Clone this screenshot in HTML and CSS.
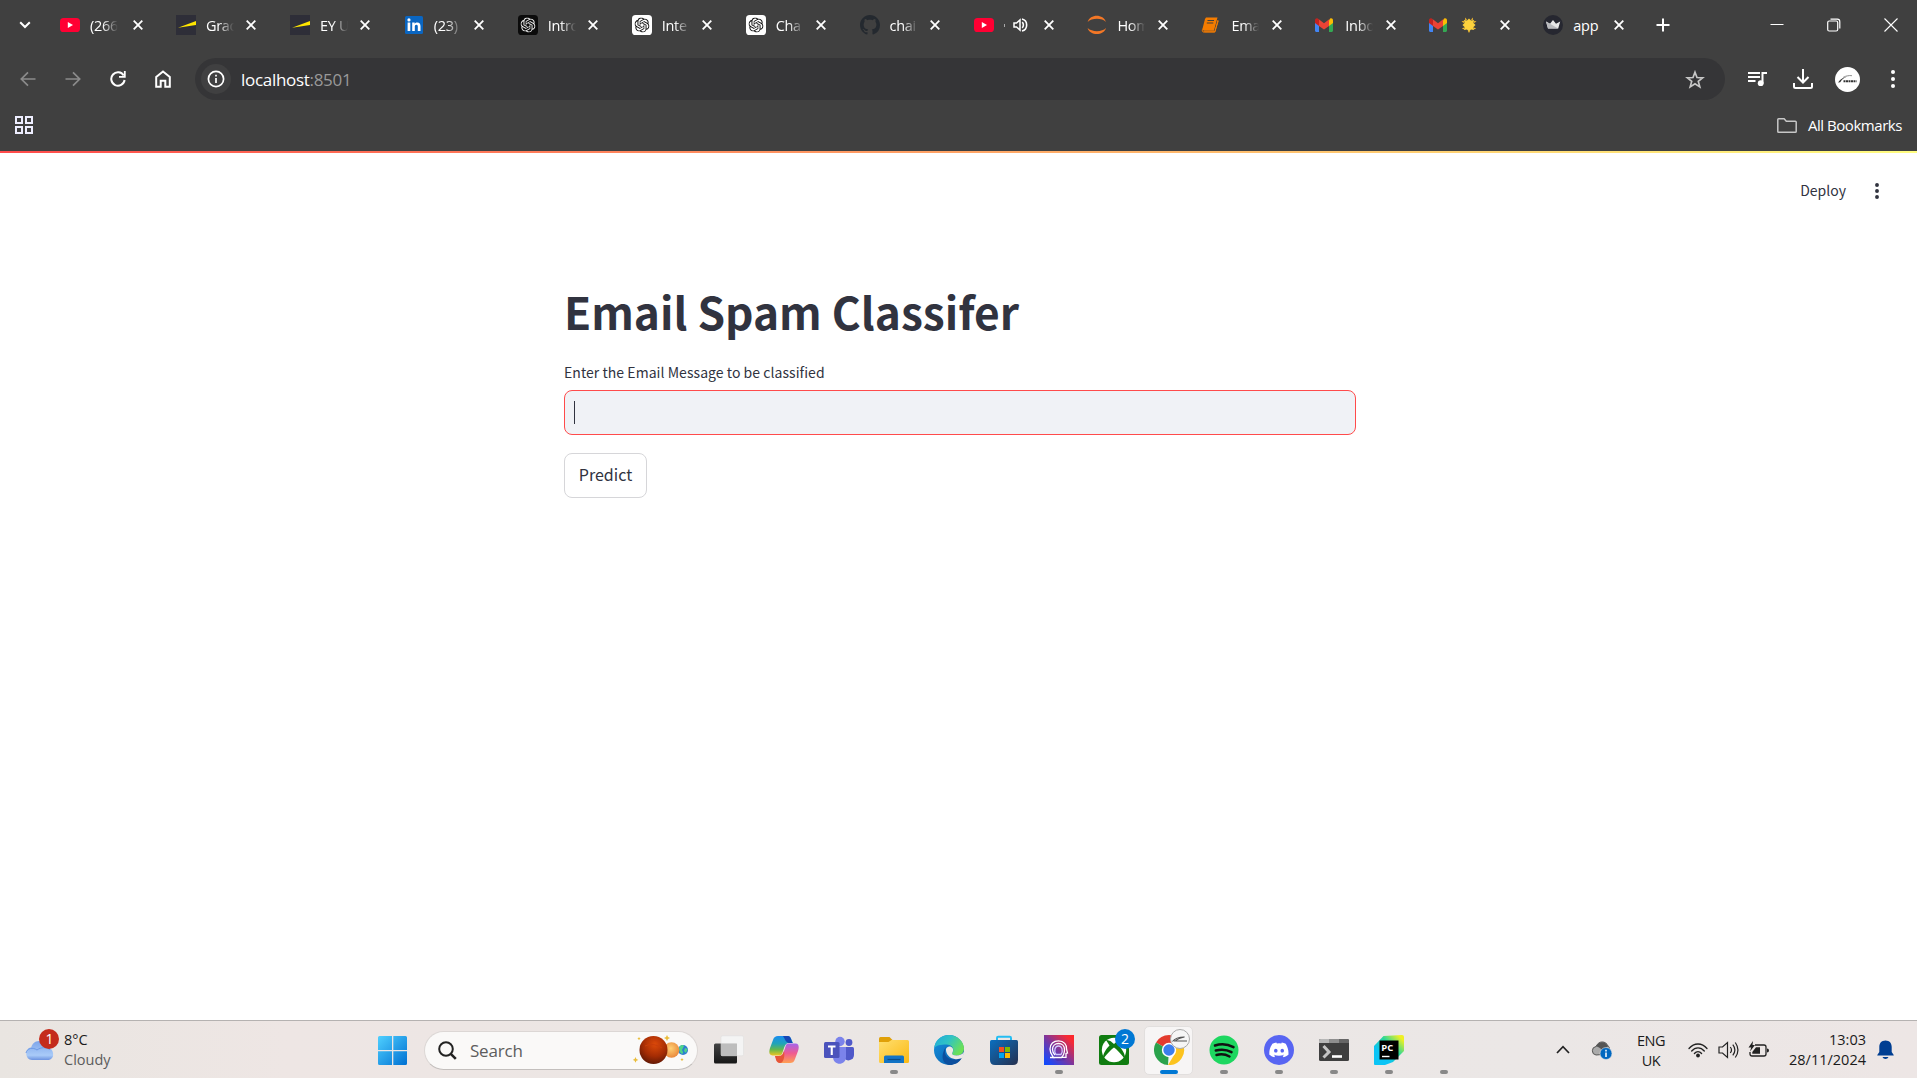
FILE: index.html
```html
<!DOCTYPE html>
<html lang="en">
<head>
<meta charset="utf-8">
<title>app</title>
<link rel="stylesheet" href="styles.css">
</head>
<body>
<svg class="defs" width="0" height="0">
  <defs>
    <linearGradient id="win" x1="0" y1="0" x2="1" y2="1"><stop offset="0" stop-color="#4fd0ff"/><stop offset="1" stop-color="#0070d2"/></linearGradient>
    <linearGradient id="cloud" x1="0" y1="0" x2="0" y2="1"><stop offset="0" stop-color="#7da5ea"/><stop offset=".75" stop-color="#a9cbf8"/><stop offset="1" stop-color="#6c93e0"/></linearGradient>
    <linearGradient id="dark" x1="0" y1="0" x2="0" y2="1"><stop offset="0" stop-color="#444"/><stop offset="1" stop-color="#171717"/></linearGradient>
    <linearGradient id="folder" x1="0" y1="0" x2="1" y2="1"><stop offset="0" stop-color="#ffdf70"/><stop offset="1" stop-color="#fbb912"/></linearGradient>
    <linearGradient id="edgeTop" x1="0" y1="0" x2="1" y2=".5"><stop offset="0" stop-color="#1fa9dc"/><stop offset=".5" stop-color="#30c3c4"/><stop offset="1" stop-color="#6be058"/></linearGradient>
    <linearGradient id="edgeLow" x1="0" y1="0" x2="1" y2="1"><stop offset="0" stop-color="#1593df"/><stop offset="1" stop-color="#0a58a7"/></linearGradient>
    <linearGradient id="bag" x1="0" y1="0" x2="1" y2="1"><stop offset="0" stop-color="#0a6fc0"/><stop offset="1" stop-color="#26304f"/></linearGradient>
    <linearGradient id="head" x1="0" y1="1" x2="1" y2="0"><stop offset="0" stop-color="#0b4bff"/><stop offset=".15" stop-color="#2446ee"/><stop offset=".5" stop-color="#80359a"/><stop offset=".85" stop-color="#f52a36"/><stop offset="1" stop-color="#ff2626"/></linearGradient>
    <linearGradient id="copA" x1="0" y1="0" x2="0" y2="1"><stop offset="0" stop-color="#1a8df0"/><stop offset=".4" stop-color="#20a4b8"/><stop offset=".7" stop-color="#66b84a"/><stop offset="1" stop-color="#f0c520"/></linearGradient>
    <linearGradient id="copB" x1="0" y1="0" x2="0" y2="1"><stop offset="0" stop-color="#a465ec"/><stop offset=".5" stop-color="#ef5a92"/><stop offset="1" stop-color="#ffa052"/></linearGradient>
    <linearGradient id="pc" x1="0" y1="1" x2="1" y2="0"><stop offset=".3" stop-color="#0bc4f5"/><stop offset=".6" stop-color="#28d79a"/><stop offset=".9" stop-color="#eef024"/></linearGradient>
    <radialGradient id="mars" cx=".55" cy=".3" r=".7"><stop offset="0" stop-color="#dc4a0a"/><stop offset=".6" stop-color="#a52c04"/><stop offset="1" stop-color="#641a05"/></radialGradient>
    <radialGradient id="venus" cx=".45" cy=".4" r=".6"><stop offset="0" stop-color="#ffd074"/><stop offset="1" stop-color="#e9893c"/></radialGradient>
  </defs>
  <symbol id="x" viewBox="0 0 10 10"><path d="M.7.7 9.3 9.3M9.3.7.7 9.3" stroke="#fff" stroke-width="1.8"/></symbol>
  <symbol id="yt" viewBox="0 0 20 20"><rect y="3" width="20" height="14" rx="3.6" fill="#ff0033"/><path d="M7.8 7v6l5.2-3z" fill="#fff"/></symbol>
  <symbol id="ey" viewBox="0 0 20 20"><path fill="#2e2e38" d="M0 0h20v20H0z"/><path d="M2 12.8 20 6v4z" fill="#ffe600"/></symbol>
  <symbol id="knot" viewBox="0 0 24 24"><path d="M22.28 9.82a5.98 5.98 0 0 0-.52-4.91 6.05 6.05 0 0 0-6.51-2.9A6.07 6.07 0 0 0 4.98 4.18a5.98 5.98 0 0 0-4 2.9 6.05 6.05 0 0 0 .74 7.1 5.98 5.98 0 0 0 .51 4.91 6.05 6.05 0 0 0 6.52 2.9A5.98 5.98 0 0 0 13.26 24a6.06 6.06 0 0 0 5.77-4.21 5.99 5.99 0 0 0 4-2.9 6.06 6.06 0 0 0-.75-7.07zM13.26 22.43a4.48 4.48 0 0 1-2.88-1.04l4.92-2.84a.8.8 0 0 0 .39-.68v-6.74l2.02 1.17v5.63a4.5 4.5 0 0 1-4.45 4.5zM3.6 18.3a4.47 4.47 0 0 1-.53-3.01l4.92 2.84a.77.77 0 0 0 .78 0l5.84-3.37v2.4L9.74 19.95A4.5 4.5 0 0 1 3.6 18.3zM2.34 7.9a4.49 4.49 0 0 1 2.37-1.98v5.68a.77.77 0 0 0 .39.68l5.81 3.35-2.02 1.17-4.83-2.79A4.5 4.5 0 0 1 2.34 7.9zm16.6 3.86L13.1 8.36 15.12 7.2l4.83 2.79a4.49 4.49 0 0 1-.68 8.1v-5.67a.79.79 0 0 0-.33-.66zm2.01-3.03-4.91-2.87a.78.78 0 0 0-.79 0L9.41 9.23V6.9l4.86-2.85a4.5 4.5 0 0 1 6.68 4.68zM8.31 12.86l-2.02-1.16V6.07a4.5 4.5 0 0 1 7.38-3.45L8.7 5.46a.8.8 0 0 0-.39.68zm1.1-2.37L12 9l2.6 1.5v3L12 15l-2.6-1.5z" fill="currentColor"/></symbol>
  <symbol id="gpt" viewBox="0 0 20 20"><rect width="20" height="20" rx="3.6" fill="#fff"/><use href="#knot" x="2.5" y="2.5" width="15" height="15" color="#111"/></symbol>
  <symbol id="gptd" viewBox="0 0 20 20"><rect width="20" height="20" rx="3.6" fill="#0b0b0b"/><use href="#knot" x="2.5" y="2.5" width="15" height="15" color="#eee"/></symbol>
  <symbol id="gm" viewBox="0 0 20 20"><path d="M0 5.2v10.3C0 16.4.6 17 1.5 17H4V8z" fill="#4285f4"/><path d="M18 5.2v10.3c0 .9-.6 1.5-1.5 1.5H14V8z" fill="#34a853"/><path d="M0 5.5V8l4 3V5.3L2.8 3.6C1.6 2.7 0 3.6 0 5.5z" fill="#c5221f"/><path d="M18 5.5V8l-4 3V5.3l1.2-1.7C16.4 2.7 18 3.6 18 5.5z" fill="#fbbc04"/><path d="M4 5.1 2.8 3.6 9 8.2l6.2-4.6L14 5.1V11l-5 3.5L4 11z" fill="#ea4335"/></symbol>
</svg>

<header class="chrome">
  <div class="tabstrip">
    <div class="tabsearch"><svg width="12" height="8" viewBox="0 0 12 8"><path d="m1.2 1.2 4.8 4.8 4.8-4.8" fill="none" stroke="#fff" stroke-width="2"/></svg></div>
    <div class="tab first"><svg class="fav"><use href="#yt"/></svg><span class="name">(266)</span><svg class="x"><use href="#x"/></svg></div>
    <div class="tab"><svg class="fav"><use href="#ey"/></svg><span class="name">Grad</span><svg class="x"><use href="#x"/></svg></div>
    <div class="tab"><svg class="fav"><use href="#ey"/></svg><span class="name">EY UK</span><svg class="x"><use href="#x"/></svg></div>
    <div class="tab"><svg class="fav" viewBox="0 0 20 20"><rect x="1" y="1" width="18" height="18" rx="1.5" fill="#0a66c2"/><path transform="translate(1 0)" d="M2.6 7.6h2.7V16H2.6zM7.2 7.6h2.5v1.2c.5-.9 1.4-1.4 2.6-1.4 2.3 0 3.2 1.4 3.2 3.9V16h-2.7v-4.3c0-1.2-.3-2-1.4-2-1.2 0-1.6.9-1.6 2V16H7.200z" fill="#fff"/><circle cx="4.95" cy="4.9" r="1.6" fill="#fff"/></svg><span class="name">(23)</span><svg class="x"><use href="#x"/></svg></div>
    <div class="tab"><svg class="fav"><use href="#gptd"/></svg><span class="name">Intro</span><svg class="x"><use href="#x"/></svg></div>
    <div class="tab"><svg class="fav"><use href="#gpt"/></svg><span class="name">Inte</span><svg class="x"><use href="#x"/></svg></div>
    <div class="tab"><svg class="fav"><use href="#gpt"/></svg><span class="name">Cha</span><svg class="x"><use href="#x"/></svg></div>
    <div class="tab"><svg class="fav" viewBox="0 0 16 16"><path fill="#24292f" d="M8 0C3.58 0 0 3.58 0 8c0 3.54 2.29 6.53 5.47 7.59.4.07.55-.17.55-.38 0-.19-.01-.82-.01-1.49-2.01.37-2.53-.49-2.69-.94-.09-.23-.48-.94-.82-1.13-.28-.15-.68-.52-.01-.53.63-.01 1.08.58 1.23.82.72 1.21 1.87.87 2.33.66.07-.52.28-.87.51-1.07-1.78-.2-3.64-.89-3.64-3.95 0-.87.31-1.59.82-2.15-.08-.2-.36-1.02.08-2.12 0 0 .67-.21 2.2.82.64-.18 1.32-.27 2-.27s1.36.09 2 .27c1.53-1.04 2.2-.82 2.2-.82.44 1.1.16 1.92.08 2.12.51.56.82 1.27.82 2.15 0 3.07-1.87 3.75-3.65 3.95.29.25.54.73.54 1.48 0 1.07-.01 1.93-.01 2.2 0 .21.15.46.55.38A8.01 8.01 0 0 0 16 8c0-4.42-3.58-8-8-8z"/></svg><span class="name">chai</span><svg class="x"><use href="#x"/></svg></div>
    <div class="tab"><svg class="fav"><use href="#yt"/></svg><span class="audio"><i></i><svg width="15" height="14" viewBox="0 0 15 14"><path d="M1 5h2.500L7 2v10L3.500 9H1z" fill="none" stroke="#fff" stroke-width="1.5"/><path d="M9.200 4.200c1.600 1.500 1.600 4.100 0 5.600M9 1c6.200 1.500 6.200 10.500 0 12" fill="none" stroke="#fff" stroke-width="1.6"/></svg></span><svg class="x"><use href="#x"/></svg></div>
    <div class="tab"><svg class="fav" viewBox="0 0 20 20"><path d="M.6 7C3-1.500 16.500-1.500 19 7 15 2.700 5 2.700.6 7zM.6 13c2.400 8 16 8 18.400 0-4 4.200-14 4.200-18.400 0z" fill="#f37726"/></svg><span class="name">Hom</span><svg class="x"><use href="#x"/></svg></div>
    <div class="tab"><svg class="fav" viewBox="0 0 20 20"><path d="M5 2.500h11.500l-3.600 13.200H3.300c-2.300-.4-2.300-1.500-1.600-2.600L4 4z" fill="#f57c00"/><path d="m17 5-3.200 11.700H2.600M1.400 14.500c-.6 2.400.8 2.600 2 2.600h10.400L17.200 6" fill="none" stroke="#f57c00" stroke-width="1"/><path d="M6.500 5.500h6.500M5.800 8h6.500" stroke="#40403f" stroke-width="1.200"/></svg><span class="name">Ema</span><svg class="x"><use href="#x"/></svg></div>
    <div class="tab"><svg class="fav"><use href="#gm"/></svg><span class="name">Inbo</span><svg class="x"><use href="#x"/></svg></div>
    <div class="tab"><svg class="fav"><use href="#gm"/></svg><span class="name sun"><svg width="16" height="16" viewBox="0 0 16 16"><path d="m8 1.500 2 2 3-.5-.5 3 2 2-2 2 .5 3-3-.5-2 2-2-2-3 .5.5-3-2-2 2-2-.5-3 3 .5z" fill="#fdd23c"/><path d="M4.500.5 6 3 3.800 2.800zM11.500.5 10 3l2.200-.2zM.5 4.500 3 6l-.2-2.200zM15.500 4.500 13 6l.2-2.200zM.8 11.800 3 10.500v1.700zM15.200 11.800 13 10.500v1.700zM8 16l-1-2h2z" fill="#f4b92c"/></svg></span><svg class="x"><use href="#x"/></svg></div>
    <div class="tab"><svg class="fav" viewBox="0 0 20 20"><circle cx="10" cy="10" r="10" fill="#262730"/><path d="m3 6.500 4 2.200L10 5l3 3.700 4.200-2.200-2 7H5z" fill="#e8e8e8"/><path d="m3 6.500 12.200 7H5z" fill="#b9babd"/></svg><span class="name full">app</span><svg class="x"><use href="#x"/></svg></div>
    <svg class="plus" width="14" height="14" viewBox="0 0 14 14"><path d="M7 .5v13M.5 7h13" stroke="#fff" stroke-width="2"/></svg>
    <div class="winbtns">
      <span><svg width="14" height="14" viewBox="0 0 14 14"><path d="M.5 6.500h13" stroke="#fff"/></svg></span>
      <span><svg width="14" height="14" viewBox="0 0 14 14"><rect x=".7" y="3" width="10" height="10" rx="1.500" fill="none" stroke="#fff" stroke-width="1.200"/><path d="M3.500 1.200h6.800c1.500 0 2.500 1 2.500 2.500v6.800" fill="none" stroke="#fff" stroke-width="1.200"/></svg></span>
      <span><svg width="14" height="14" viewBox="0 0 14 14"><path d="m.5.5 13 13m0-13-13 13" stroke="#fff" stroke-width="1.100"/></svg></span>
    </div>
  </div>
  <div class="toolbar">
    <span class="nav"><svg width="16" height="16" viewBox="0 0 16 16"><path d="M15.500 8H2M8 1.300 1.300 8 8 14.700" fill="none" stroke="#8b8b8b" stroke-width="1.700"/></svg></span>
    <span class="nav"><svg width="16" height="16" viewBox="0 0 16 16"><path d="M.5 8H14M8 1.300 14.700 8 8 14.700" fill="none" stroke="#8b8b8b" stroke-width="1.700"/></svg></span>
    <span class="nav"><svg width="16" height="16" viewBox="0 0 16 16"><path d="M13.700 4.500A6.700 6.700 0 1 0 14.600 9" fill="none" stroke="#fff" stroke-width="2"/><path d="M15.700 0v6.800H9V5h4.900V0z" fill="#fff"/></svg></span>
    <span class="nav"><svg width="16" height="18" viewBox="0 0 16 18"><path d="M1.200 16.800V7L8 1.500 14.800 7v9.800h-4.500v-6H5.700v6z" fill="none" stroke="#fff" stroke-width="2"/></svg></span>
    <div class="omnibox">
      <span class="info"><svg width="18" height="18" viewBox="0 0 18 18"><circle cx="9" cy="9" r="7.600" fill="none" stroke="#fff" stroke-width="1.700"/><path d="M9 8v5M9 4.800v1.800" stroke="#fff" stroke-width="1.700"/></svg></span>
      <span class="url">localhost<em>:8501</em></span>
      <svg class="star" width="20" height="19" viewBox="0 0 20 19"><path d="m10 2.200 2 5.300 5.700.3-4.400 3.600 1.500 5.500L10 13.800l-4.800 3.100 1.500-5.500-4.400-3.600L8 7.500z" fill="none" stroke="#c7c7c7" stroke-width="1.700"/></svg>
    </div>
    <div class="actions">
      <span><svg width="20" height="16" viewBox="0 0 20 16"><path d="M0 2h12M0 6h12M0 10h7.500" stroke="#fff" stroke-width="2"/><path d="M14.500 12.500V2H19" fill="none" stroke="#fff" stroke-width="2"/><circle cx="12.700" cy="12.200" r="2.900" fill="#fff"/></svg></span>
      <span><svg width="20" height="20" viewBox="0 0 20 20"><path d="M10 0v13M4.500 8l5.500 5.500L15.500 8M1 14v3.500c0 .8.500 1.500 1.500 1.500h15c1 0 1.500-.7 1.500-1.500V14" fill="none" stroke="#fff" stroke-width="2"/></svg></span>
      <span><svg width="25" height="25" viewBox="0 0 25 25"><circle cx="12.500" cy="12.500" r="12.500" fill="#fff"/><path d="M3 15.500c2.500-3.600 6-5.800 11-6.300-4 1-7 2.300-8.800 6z" fill="#333"/><path d="M8 10.500c3-1.800 6-2.200 9-1.800" fill="none" stroke="#777" stroke-width=".8"/><path d="M8.500 14.200h13" stroke="#333" stroke-width="2" stroke-dasharray="2 .5"/></svg></span>
      <span><svg width="4" height="18" viewBox="0 0 4 18"><g fill="#fff"><circle cx="2" cy="2" r="2"/><circle cx="2" cy="9" r="2"/><circle cx="2" cy="16" r="2"/></g></svg></span>
    </div>
  </div>
  <div class="bookmarks">
    <svg width="18" height="18" viewBox="0 0 18 18"><g fill="none" stroke="#eef" stroke-width="2"><path d="M1 1h6v6H1zM11 1h6v6h-6zM1 11h6v6H1zM11 11h6v6h-6z"/></g></svg>
    <div class="allb"><svg width="20" height="15" viewBox="0 0 20 15"><path d="M.8 1.600c0-.5.300-.8.800-.8h5.500l2.200 2.400h9c.500 0 .900.300.900.900v9.300c0 .5-.4.800-.9.800H1.600c-.5 0-.8-.3-.8-.8z" fill="none" stroke="#c7c7c7" stroke-width="1.500"/></svg><span>All Bookmarks</span></div>
  </div>
</header>

<main class="app">
  <div class="decoration"></div>
  <div class="appbar"><span class="deploy">Deploy</span><svg width="4" height="16" viewBox="0 0 4 16"><g fill="#31333f"><circle cx="2" cy="2" r="1.950"/><circle cx="2" cy="8" r="1.950"/><circle cx="2" cy="14" r="1.950"/></g></svg></div>
  <section class="block">
    <h1>Email Spam Classifer</h1>
    <label>Enter the Email Message to be classified</label>
    <div class="input"><i class="caret"></i></div>
    <button class="predict">Predict</button>
  </section>
</main>

<footer class="taskbar">
  <div class="weather">
    <svg width="35" height="34" viewBox="0 0 35 34"><path d="M7 31a6.500 6.500 0 0 1-.7-12.800C7 15 10 12 14 12c4.500 0 7.500 3 8.300 6.800A6.300 6.300 0 0 1 24 31z" fill="url(#cloud)"/><path d="M1 24c1-5 7-6 11-3 4-3 9-3 13-.5" fill="none" stroke="#6d99e6" stroke-width="1"/><circle cx="24" cy="10" r="10" fill="#c42b1c"/><text x="24.500" y="15" text-anchor="middle" class="badge-text">1</text></svg>
    <div><b>8°C</b><span>Cloudy</span></div>
  </div>
  <svg class="start" width="30" height="30" viewBox="0 0 30 30"><path d="M1.500 0H14v14H0V1.500Q0 0 1.500 0zM15.300 0h12.200Q29 0 29 1.500V14H15.300zM0 15.300h14V29H1.500Q0 29 0 27.500zM15.300 15.300H29v12.200q0 1.500-1.500 1.500H15.300z" fill="url(#win)"/></svg>
  <div class="search">
    <svg width="19" height="19" viewBox="0 0 19 19"><circle cx="8" cy="8" r="6.800" fill="none" stroke="#222" stroke-width="2"/><path d="m12.800 12.800 5 5" stroke="#222" stroke-width="2.600"/></svg>
    <span>Search</span>
    <svg width="56" height="30" viewBox="0 0 56 30"><circle cx="50" cy="15" r="5" fill="#2e7ed0"/><path d="M47 11q3-2 4 0l-2 4q2 3 0 4-3-2-3-5zM52 13l2.500 1-1.500 4-2-2z" fill="#4fd488"/><circle cx="38.500" cy="15" r="7.800" fill="url(#venus)"/><circle cx="20.500" cy="15" r="14" fill="url(#mars)"/><path d="M12 11q8-4 17 2M18 4q8 1 9 6" stroke="#c93d0a" fill="none"/><g fill="#eabd3b"><path d="m34 0 1 2 2 1-2 1-1 2-1-2-2-1 2-1zM2.500 22l.9 2 2 .9-2 .9-.9 2-.9-2-2-.9 2-.9zM6 2l.6 1 1 .6-1 .6-.6 1-.6-1-1-.6 1-.6zM49 23l.6 1 1 .6-1 .6-.6 1-.6-1-1-.6 1-.6z"/></g></svg>
  </div>
  <div class="apps">
    <span><svg width="30" height="30" viewBox="0 0 30 30"><rect y="8.500" width="23" height="20" rx="1.500" fill="url(#dark)"/><rect x="7" y=".8" width="22.500" height="20" rx="1.500" fill="#f5f5f5" fill-opacity=".9" stroke="#ddd" stroke-width=".5"/><path d="M7 8.500h16v12.300H7z" fill="#bdbdbd"/></svg></span>
    <span><svg width="30" height="30" viewBox="0 0 30 30"><path d="M9 1h10c3 0 3.500 4 5 7h-4c-3 0-4 2-5 5l-2 6c-1 2-3 1.500-5 1.500H3.500C-.5 20.500 0 16 1 13l3-8c1-3 2.500-4 5-4z" fill="url(#copA)"/><path d="M14 1h5c3 0 3 4 4.500 7H20c-3 0-4-4-6-7z" fill="#1747b5"/><path d="M21 28H11c-3 0-3.500-4-5-7h4c3 0 4-2 5-5l2-6c1-2 3-1.500 5-1.500h4.500c4 0 3.500 4.500 2.500 7.500l-3 8c-1 3-2.500 4-5 4z" fill="url(#copB)"/><path d="M6 21h4c3 0 4-2 5-5 1 4 0 12-4 12s-4-4-5-7z" fill="#e65538"/></svg></span>
    <span><svg width="30" height="30" viewBox="0 0 30 30"><circle cx="25" cy="7.500" r="3.400" fill="#5059c9"/><path d="M20 12h8.500q1.500 0 1.500 1.500V20a5.500 5.500 0 0 1-10 3z" fill="#5059c9"/><circle cx="16" cy="6.500" r="4.700" fill="#7b83eb"/><path d="M9 12h13v10c0 9-13 9-13 0z" fill="#7b83eb"/><rect y="7" width="15.500" height="16" rx="1.500" fill="#4b53bc"/><path d="M4 10.500h7.500v2H8.800V20H6.700v-7.500H4z" fill="#fff"/></svg></span>
    <span class="on"><svg width="30" height="30" viewBox="0 0 30 30"><path d="M0 3.500Q0 2 1.500 2h9L14 5.500V10H0z" fill="#e0a008"/><path d="M0 7h9.500l3-2H28.500Q30 5 30 6.500v20q0 1.500-1.500 1.500h-27Q0 28 0 26.500z" fill="url(#folder)"/><path d="M5 28v-6q0-1.500 1.500-1.500h17q1.500 0 1.500 1.500v6z" fill="#1374c5"/><path d="M8.500 24.500h13" stroke="#0a4c86" stroke-width="1.200"/></svg></span>
    <span><svg width="30" height="30" viewBox="0 0 30 30"><circle cx="15" cy="15" r="15" fill="url(#edgeLow)"/><path d="M.2 13C1 5 7.500 0 15 0c8.500 0 15 6.500 15 13.500 0 4.500-3.500 7-7.500 7-4 0-5-1.500-4-3 2.500-4-1-8-6-8C6.500 9.500 2 10.500.2 13z" fill="url(#edgeTop)"/><path d="M11 17c0 6 7 9.500 16 6.500l.8-.5C25 28 20 30 16 30 7 29 7 18.500 12 12c-.7 1.500-1 3-1 5z" fill="#0c4f9e"/><path d="M12 14c1-3 5-3.500 6.800-.5.700 1.500.2 3-.3 4-1 1.500 0 3 4 3 3.500 0 6-1.500 7.400-3.500.2 3-1 5-1.900 6-2 1-5 1.500-7.500 1-5-.5-9-5.500-8.500-10z" fill="#ede8e6"/></svg></span>
    <span><svg width="30" height="30" viewBox="0 0 30 30"><path d="M8 8V3q0-1.200 1.200-1.200h11.600Q22 1.800 22 3v5" fill="none" stroke="#25bdf2" stroke-width="2"/><path d="M1 6.500Q1 5 2.500 5h25Q29 5 29 6.500V25q0 5-5 5H6q-5 0-5-5z" fill="url(#bag)"/><path d="M10 12h5v5h-5z" fill="#f25022"/><path d="M16 12h5v5h-5z" fill="#7fba00"/><path d="M10 18h5v5h-5z" fill="#00a4ef"/><path d="M16 18h5v5h-5z" fill="#ffb900"/></svg></span>
    <span class="on"><svg width="30" height="30" viewBox="0 0 30 30"><path d="M0 0h30v30H0z" fill="url(#head)"/><path d="M8 21l5 5 9-1-5-4z" fill="#4a299b" opacity=".5"/><g fill="none" stroke="#fff" stroke-width="1.300"><path d="M6 22.500h3.500c-1-2-3.500-4-3.500-8.500C6 9 9.500 5.800 14.500 5.800c5.500 0 8.500 4 8 8.200l1 4-1.500.5v3.800h-4.500"/><path d="M9.500 22.500h8c2-2 3-4.500 3-8 0-3.500-2.500-6-6-6s-6 2.500-6 6c0 2.500 1 4 2.500 5.500"/><path d="M12 19.500c-2.500-3.500-1-8.500 2.500-8.500s5 5 2.500 8.500z" stroke="#d0c8ff"/></g></svg></span>
    <span><svg width="36" height="36" viewBox="0 0 36 36" class="badged"><rect y="6" width="30" height="30" rx="2.500" fill="#107c10"/><circle cx="15" cy="21" r="12.200" fill="#fff"/><path d="M7 11c3-.5 6 2 8 4 2-2 5-4.500 8-4l-3.500 5.500C24 21 27 27 25.500 29.500 23 26 18.500 21 15 18.500 11.500 21 7 26 4.500 29.500 3 27 6 21 10.500 16.500z" fill="#107c10"/><circle cx="26" cy="10" r="10" fill="#0078d4"/><text x="26" y="15" text-anchor="middle" class="badge-text">2</text></svg></span>
    <span class="on active"><svg width="36" height="36" viewBox="0 0 36 36" class="badged"><path d="M15 21 2 13.500A15 15 0 0 1 28 13.500z" fill="#e33b2e"/><path d="m15 21-1 15A15 15 0 0 1 2 13.500z" fill="#2aa24c"/><path d="M15 14h13.300A15 15 0 0 1 14 36l7-11.500z" fill="#fcc31e"/><circle cx="15" cy="21" r="7.200" fill="#fff"/><circle cx="15" cy="21" r="5.700" fill="#3b7eed"/><circle cx="26" cy="10" r="9.500" fill="#f6f6f6" stroke="#aaa"/><path d="M18.500 12.500c3-4 8-4.500 12-4.500-5 1-7 2-9 4M20 12h13" fill="none" stroke="#555" stroke-width="1.200"/></svg></span>
    <span class="on"><svg width="30" height="30" viewBox="0 0 30 30"><circle cx="15" cy="15" r="14.500" fill="#1ed760"/><path d="M6 10.500c6-2 13-1.300 18.500 1.700M6.800 15.500c5.500-1.500 11-1 15.700 1.700M7.500 20c4.500-1.200 9-.8 13 1.500" fill="none" stroke="#111" stroke-width="2.500" stroke-linecap="round"/></svg></span>
    <span class="on"><svg width="30" height="30" viewBox="0 0 30 30"><circle cx="15" cy="15" r="15" fill="#5865f2"/><path transform="translate(5.300 5.200) scale(.81)" d="M20.300 4.370a19.800 19.800 0 0 0-4.880-1.510c-.21.380-.45.860-.61 1.250a18.300 18.300 0 0 0-5.490 0 12.600 12.600 0 0 0-.62-1.250 19.700 19.700 0 0 0-4.880 1.510C.53 9.050-.32 13.580.1 18.060a20 20 0 0 0 6 3.030c.46-.63.870-1.300 1.220-1.990a12.900 12.900 0 0 1-1.870-.9l.37-.29c3.930 1.790 8.180 1.790 12.060 0l.37.290c-.6.350-1.220.650-1.870.9.350.69.760 1.360 1.220 1.990a19.900 19.900 0 0 0 6-3.030c.5-5.180-.84-9.670-3.300-13.690zM8.020 15.330c-1.180 0-2.160-1.080-2.160-2.420s.96-2.420 2.160-2.420 2.180 1.090 2.160 2.420c0 1.340-.96 2.420-2.160 2.420zm7.970 0c-1.180 0-2.150-1.080-2.150-2.420s.95-2.420 2.150-2.420 2.180 1.090 2.160 2.420c0 1.340-.94 2.420-2.160 2.420z" fill="#fff"/></svg></span>
    <span class="on"><svg width="30" height="30" viewBox="0 0 30 30"><rect y="4" width="30" height="22" rx="1.500" fill="#3f3f3f"/><path d="M1.500 4H10v4H0V5.500Q0 4 1.500 4z" fill="#b7b7b7"/><path d="M10 4h10v4H10z" fill="#8e8e8e"/><path d="M20 4h8.500Q30 4 30 5.500V8H20z" fill="#666"/><path d="m4.500 11 5.500 6-5.500 5.500" fill="none" stroke="#c5c5c5" stroke-width="3"/><path d="M13 21.500h10" stroke="#fff" stroke-width="2.600"/></svg></span>
    <span class="on"><svg width="30" height="30" viewBox="0 0 30 30"><path d="M9.500 1 28 0q2 0 2 2v14L19 27l-8 3H1q-1 0-1-1V11z" fill="url(#pc)"/><path d="M5.500 5.500h19v19h-19z" fill="#000"/><text x="7.200" y="15.500" class="pc-text">PC</text><path d="M8 21.500h7.500" stroke="#fff" stroke-width="1.400"/></svg></span>
    <span class="on"></span>
  </div>
  <div class="tray">
    <span class="t40"><svg width="14" height="9" viewBox="0 0 14 9"><path d="m1 8 6-6.300L13 8" fill="none" stroke="#222" stroke-width="1.700"/></svg></span>
    <span class="t38"><svg width="22" height="20" viewBox="0 0 22 20"><path d="M5 15a4.300 4.300 0 0 1 0-8.500C8 0 15 1 17 6c2 1 2 5 0 8z" fill="#aaa" stroke="#555"/><path d="M5 6.500c3-6 10-5 12 0l-6 4c-2-3-4-4-6-4z" fill="#555"/><circle cx="15" cy="13.500" r="6" fill="#0067c0" stroke="#e9e5e3" stroke-width=".6"/><path d="M15 12.500V17M15 9.800v1.600" stroke="#fff" stroke-width="1.500"/></svg></span>
    <span class="lang">ENG<br>UK</span>
    <span class="t30"><svg width="20" height="16" viewBox="0 0 20 16"><g fill="none" stroke="#222" stroke-width="1.300" stroke-linecap="round"><path d="M1 6.500c5-6 13-6 18 0M3.700 9c3.600-4.300 9-4.300 12.600 0M6.400 11.500c2.200-2.600 5-2.600 7.200 0"/></g><circle cx="10" cy="13.500" r="1.900" fill="#222"/></svg></span>
    <span class="t30"><svg width="21" height="18" viewBox="0 0 21 18"><path d="M1 6h3.500l5-4.500v15l-5-4.500H1zM12.300 6q2.400 3 0 6M14.800 3.700q4.200 5.300 0 10.600M17.300 1.500q5.300 7.500 0 15" fill="none" stroke="#222" stroke-width="1.200"/></svg></span>
    <span class="t30"><svg width="21" height="18" viewBox="0 0 21 18"><path d="M7 4h9q2 0 2 2v7q0 2-2 2H4q-2 0-2-2v-2" fill="none" stroke="#222" stroke-width="1.300"/><path d="M19 7.500q2 0 2 2t-2 2zM8 6.300h4v6.500H4.300V11z" fill="#222"/><path d="M5 0 .5 6.500h2.700L2 10.500 7 4H4.500z" fill="#222"/></svg></span>
    <div class="clock">13:03<br>28/11/2024</div>
    <span class="t38"><svg width="17" height="20" viewBox="0 0 17 20"><path d="M8.500.5c4 0 6.200 2.800 6.200 6.500v5l2 3v.6H.3V15l2-3V7C2.300 3.300 4.500.5 8.500.5zM5.500 17h6c-1 2.500-5 2.500-6 0z" fill="#003e92"/></svg></span>
  </div>
</footer>
</body>
</html>
```

FILE: styles.css
```css
* { box-sizing: border-box; }
body {
  margin: 0; width: 1917px; height: 1078px; overflow: hidden;
  display: flex; flex-direction: column; background: #fff;
  font-family: "Open Sans", "Noto Sans", sans-serif;
}
svg { display: block; flex: none; }
.defs { position: absolute; }

/* browser frame */
.chrome { height: 151px; flex: none; background: #404040; color: #fff; }
.tabstrip { height: 50px; display: flex; align-items: center; }
.tabsearch { width: 62px; padding-left: 19px; }
.tab { width: 113.95px; flex: none; display: flex; align-items: center; }
.tab.first { margin-left: -2px; width: 115.95px; }
.tab.first .x { margin-left: 14.5px; }
.fav { width: 20px; height: 20px; }
.name {
  width: 28px; margin-left: 10px; overflow: hidden; white-space: nowrap;
  font-size: 14.5px; line-height: 22px; letter-spacing: -.3px; padding-top: 1px;
  mask-image: linear-gradient(90deg, #000 45%, transparent 100%);
}
.name.full { mask-image: none; letter-spacing: -.2px; }
.name.sun { margin-left: 12px; width: 26px; mask-image: none; padding: 0; }
.x { width: 10px; height: 10px; margin-left: 12.5px; }
.audio { width: 28px; margin-left: 10px; display: flex; align-items: center; gap: 8px; }
.audio i { width: 1px; height: 3px; background: #aaa; }
.plus { margin-left: -1px; }
.winbtns { margin-left: auto; display: flex; margin-right: -2px; }
.winbtns span { width: 57px; display: flex; justify-content: center; }
.toolbar { height: 58px; display: flex; align-items: center; padding-left: 5px; }
.nav { width: 45px; display: flex; justify-content: center; }
.omnibox {
  width: 1530px; height: 42px; margin-left: 10px; border-radius: 21px; background: #353537;
  display: flex; align-items: center; padding: 0 20px 0 6px;
}
.info { width: 30px; height: 30px; border-radius: 50%; background: #404041; display: grid; place-items: center; }
.url { margin-left: 10px; font-size: 17px; letter-spacing: -.3px; }
.url em { font-style: normal; color: #999; }
.star { margin-left: auto; }
.actions { display: flex; margin-left: 10px; }
.actions span { width: 45px; display: flex; justify-content: center; align-items: center; }
.bookmarks { height: 34px; display: flex; align-items: center; justify-content: space-between; padding: 0 15px; }
.allb { display: flex; align-items: center; gap: 11px; font-size: 15px; letter-spacing: -.45px; white-space: nowrap; }

/* app page */
.app { flex: 1; font-family: "Noto Sans CJK SC", sans-serif; color: #31333f; }
.decoration { height: 2px; background: linear-gradient(90deg, #ff4b4b, #fffd80); }
.appbar { height: 76px; display: flex; justify-content: flex-end; align-items: center; gap: 29px; padding-right: 38px; font-size: 14px; }
.deploy { padding-bottom: 2px; }
.block { width: 792px; margin: 46px 0 0 564px; }
.block h1 { margin: 0; font-size: 44.25px; font-weight: 700; line-height: 72px; white-space: nowrap; }
.block label { display: block; margin-top: 13px; height: 30px; line-height: 24px; font-size: 14px; letter-spacing: .05px; font-variant-ligatures: common-ligatures; }
.input { height: 45px; border: 1px solid #ff4b4b; border-radius: 8px; background: #f0f2f6; padding: 10px 9px; }
.caret { display: block; width: 1px; height: 23px; background: #31333f; }
.predict {
  display: block; margin-top: 18px; width: 83px; height: 45px; padding: 0 0 3px; border: 1px solid #d6d6d9; border-radius: 8px;
  background: #fff; color: #31333f; font: 16px "Noto Sans CJK SC", sans-serif;
}

/* taskbar */
.taskbar {
  height: 58px; flex: none; border-top: 1px solid #b5b2b1; background: linear-gradient(90deg, #e9e5e1, #eee6e4 15%, #ebe6e4 40%, #ebe7e6 80%, #ede6e5);
  display: flex; align-items: center; color: #1b1b1b; font-size: 14.500px;
}
.weather { width: 378px; padding-left: 25px; display: flex; gap: 4px; line-height: 20px; }
.weather svg { margin-top: -1px; }
.weather div { display: flex; flex-direction: column; }
.weather b { font-weight: 400; }
.weather span { color: #5c5c5c; }
.badge-text { font: 14px "Open Sans", sans-serif; fill: #fff; }
.start { margin-top: 3px; }
.search {
  width: 274px; height: 39px; margin: 1px 3px 0 16px; border-radius: 20px; background: #faf9f8;
  border: 1px solid #dcd7d5; border-bottom-color: #c3bfbd;
  display: flex; align-items: center; padding: 0 8px 0 13px; font-size: 17px; color: #5d5d5d;
}
.search span { margin-left: 13px; flex: 1; letter-spacing: -.2px; }
.apps { display: flex; height: 100%; }
.apps > span { width: 55px; height: 57px; display: flex; justify-content: center; align-items: center; padding-top: 1px; position: relative; }
.apps .badged { margin: -6px 0 0 6px; }
.apps .on::after { content: ""; position: absolute; bottom: 4px; left: 23.500px; width: 8px; height: 4px; border-radius: 2px; background: #888; }
.apps .active::before { content: ""; position: absolute; inset: 5px 3px 3px 3px; border-radius: 5px; background: #f7f5f5; border: 1px solid #e2dfde; }
.apps .active svg { position: relative; }
.apps .active::after { width: 18px; left: 18.500px; background: #0078d4; }
.pc-text { font: 700 9.500px "Open Sans", sans-serif; fill: #fff; }
.tray { margin-left: auto; padding-right: 13px; display: flex; align-items: center; line-height: 20px; }
.tray span { display: flex; justify-content: center; align-items: center; }
.t40 { width: 40px; }
.t38 { width: 38px; }
.t30 { width: 30px; }
.tray .lang { width: 60px; margin-right: 2px; display: block; text-align: center; letter-spacing: -.5px; padding-top: 2px; }
.clock { width: 93px; text-align: right; letter-spacing: 0; white-space: nowrap; }
```
